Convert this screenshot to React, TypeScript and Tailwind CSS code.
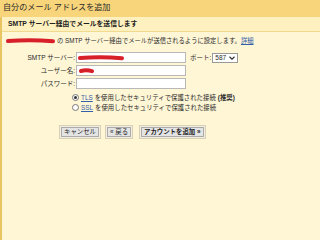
import React from 'react';

const font = { fontFamily: "'Liberation Sans', 'Noto Sans CJK JP', sans-serif" };

function Scribble({ w }: { w: number }) {
  return (
    <svg width={w} height="6" className="block">
      <path d={`M3 3 Q ${w / 2} 1.5 ${w - 3} 3.2`} stroke="#d8202a" strokeWidth="4" strokeLinecap="round" fill="none" />
    </svg>
  );
}

function Btn({ children }: { children: React.ReactNode }) {
  return (
    <div className="border border-[#d8d0b8] p-[1px] bg-[#f4eedc]">
      <div className="h-[10px] px-[2px] flex items-center border border-[#aaa] bg-[#e4e4e4] text-[6.4px] text-[#222] leading-none">
        {children}
      </div>
    </div>
  );
}

export default function App() {
  return (
    <div className="w-[320px] h-[240px] overflow-hidden bg-[#fff6d6] text-[#222]" style={font}>
      {/* Title */}
      <div className="h-[17px] bg-[#f8d47a] flex items-center pl-[3px] text-[8.1px] text-[#2a2a2a]">
        自分のメール アドレスを追加
      </div>

      <div className="border-l-2 border-[#e9c463] h-[223px]">
        {/* Subtitle band */}
        <div className="h-[15px] bg-[#fff1bf] border-b border-[#f1d98d] flex items-center pl-[6px] text-[6.8px] font-bold text-[#222]">
          SMTP サーバー経由でメールを送信します
        </div>

        {/* Description */}
        <div className="mt-[4px] pl-[3px] flex items-center text-[6.3px] text-[#2a2a2a] h-[10px]">
          <Scribble w={51} />
          <span className="ml-[1px]">の SMTP サーバー経由でメールが送信されるように設定します。</span>
          <span className="text-[#3260a8] underline">詳細</span>
        </div>

        {/* Form */}
        <div className="mt-[6px] grid grid-cols-[74px_110px_auto] gap-y-[2px] items-center text-[6.5px] text-[#2a2a2a]">
          <div className="text-right pr-[1px]">SMTP サーバー:</div>
          <div className="h-[11px] bg-white border border-[#b8b8b8] flex items-center">
            <Scribble w={48} />
          </div>
          <div className="flex items-center pl-[4px] gap-[1px]">
            <span>ポート:</span>
            <div className="h-[10px] w-[26px] bg-white border border-[#999] flex items-center justify-between px-[2px]">
              <span>587</span>
              <svg width="6" height="4" viewBox="0 0 6 4">
                <path d="M0.5 0.8 L3 3.2 L5.5 0.8" stroke="#333" strokeWidth="1.2" fill="none" />
              </svg>
            </div>
          </div>

          <div className="text-right pr-[1px]">ユーザー名:</div>
          <div className="h-[11px] bg-white border border-[#b8b8b8] flex items-center pl-[1px]">
            <Scribble w={17} />
          </div>
          <div />

          <div className="text-right pr-[1px]">パスワード:</div>
          <div className="h-[11px] bg-white border border-[#b8b8b8]" />
          <div />
        </div>

        {/* Radios */}
        <div className="mt-[4px] pl-[70px] flex flex-col gap-[1px] text-[6.4px] text-[#2a2a2a]">
          <div className="flex items-center gap-[2px] h-[9px]">
            <span className="w-[7px] h-[7px] rounded-full border border-[#777] bg-white flex items-center justify-center">
              <span className="w-[3px] h-[3px] rounded-full bg-[#333]" />
            </span>
            <span className="text-[#3260a8] underline">TLS</span>
            <span>を使用したセキュリティで保護された接続</span>
            <span className="font-bold">(推奨)</span>
          </div>
          <div className="flex items-center gap-[2px] h-[9px]">
            <span className="w-[7px] h-[7px] rounded-full border border-[#777] bg-white" />
            <span className="text-[#3260a8] underline">SSL</span>
            <span>を使用したセキュリティで保護された接続</span>
          </div>
        </div>

        {/* Buttons */}
        <div className="mt-[13px] pl-[57px] flex items-center">
          <Btn>キャンセル</Btn>
          <div className="ml-[4px]"><Btn>« 戻る</Btn></div>
          <div className="ml-[6px]"><Btn><span className="font-bold">アカウントを追加 »</span></Btn></div>
        </div>
      </div>
    </div>
  );
}
